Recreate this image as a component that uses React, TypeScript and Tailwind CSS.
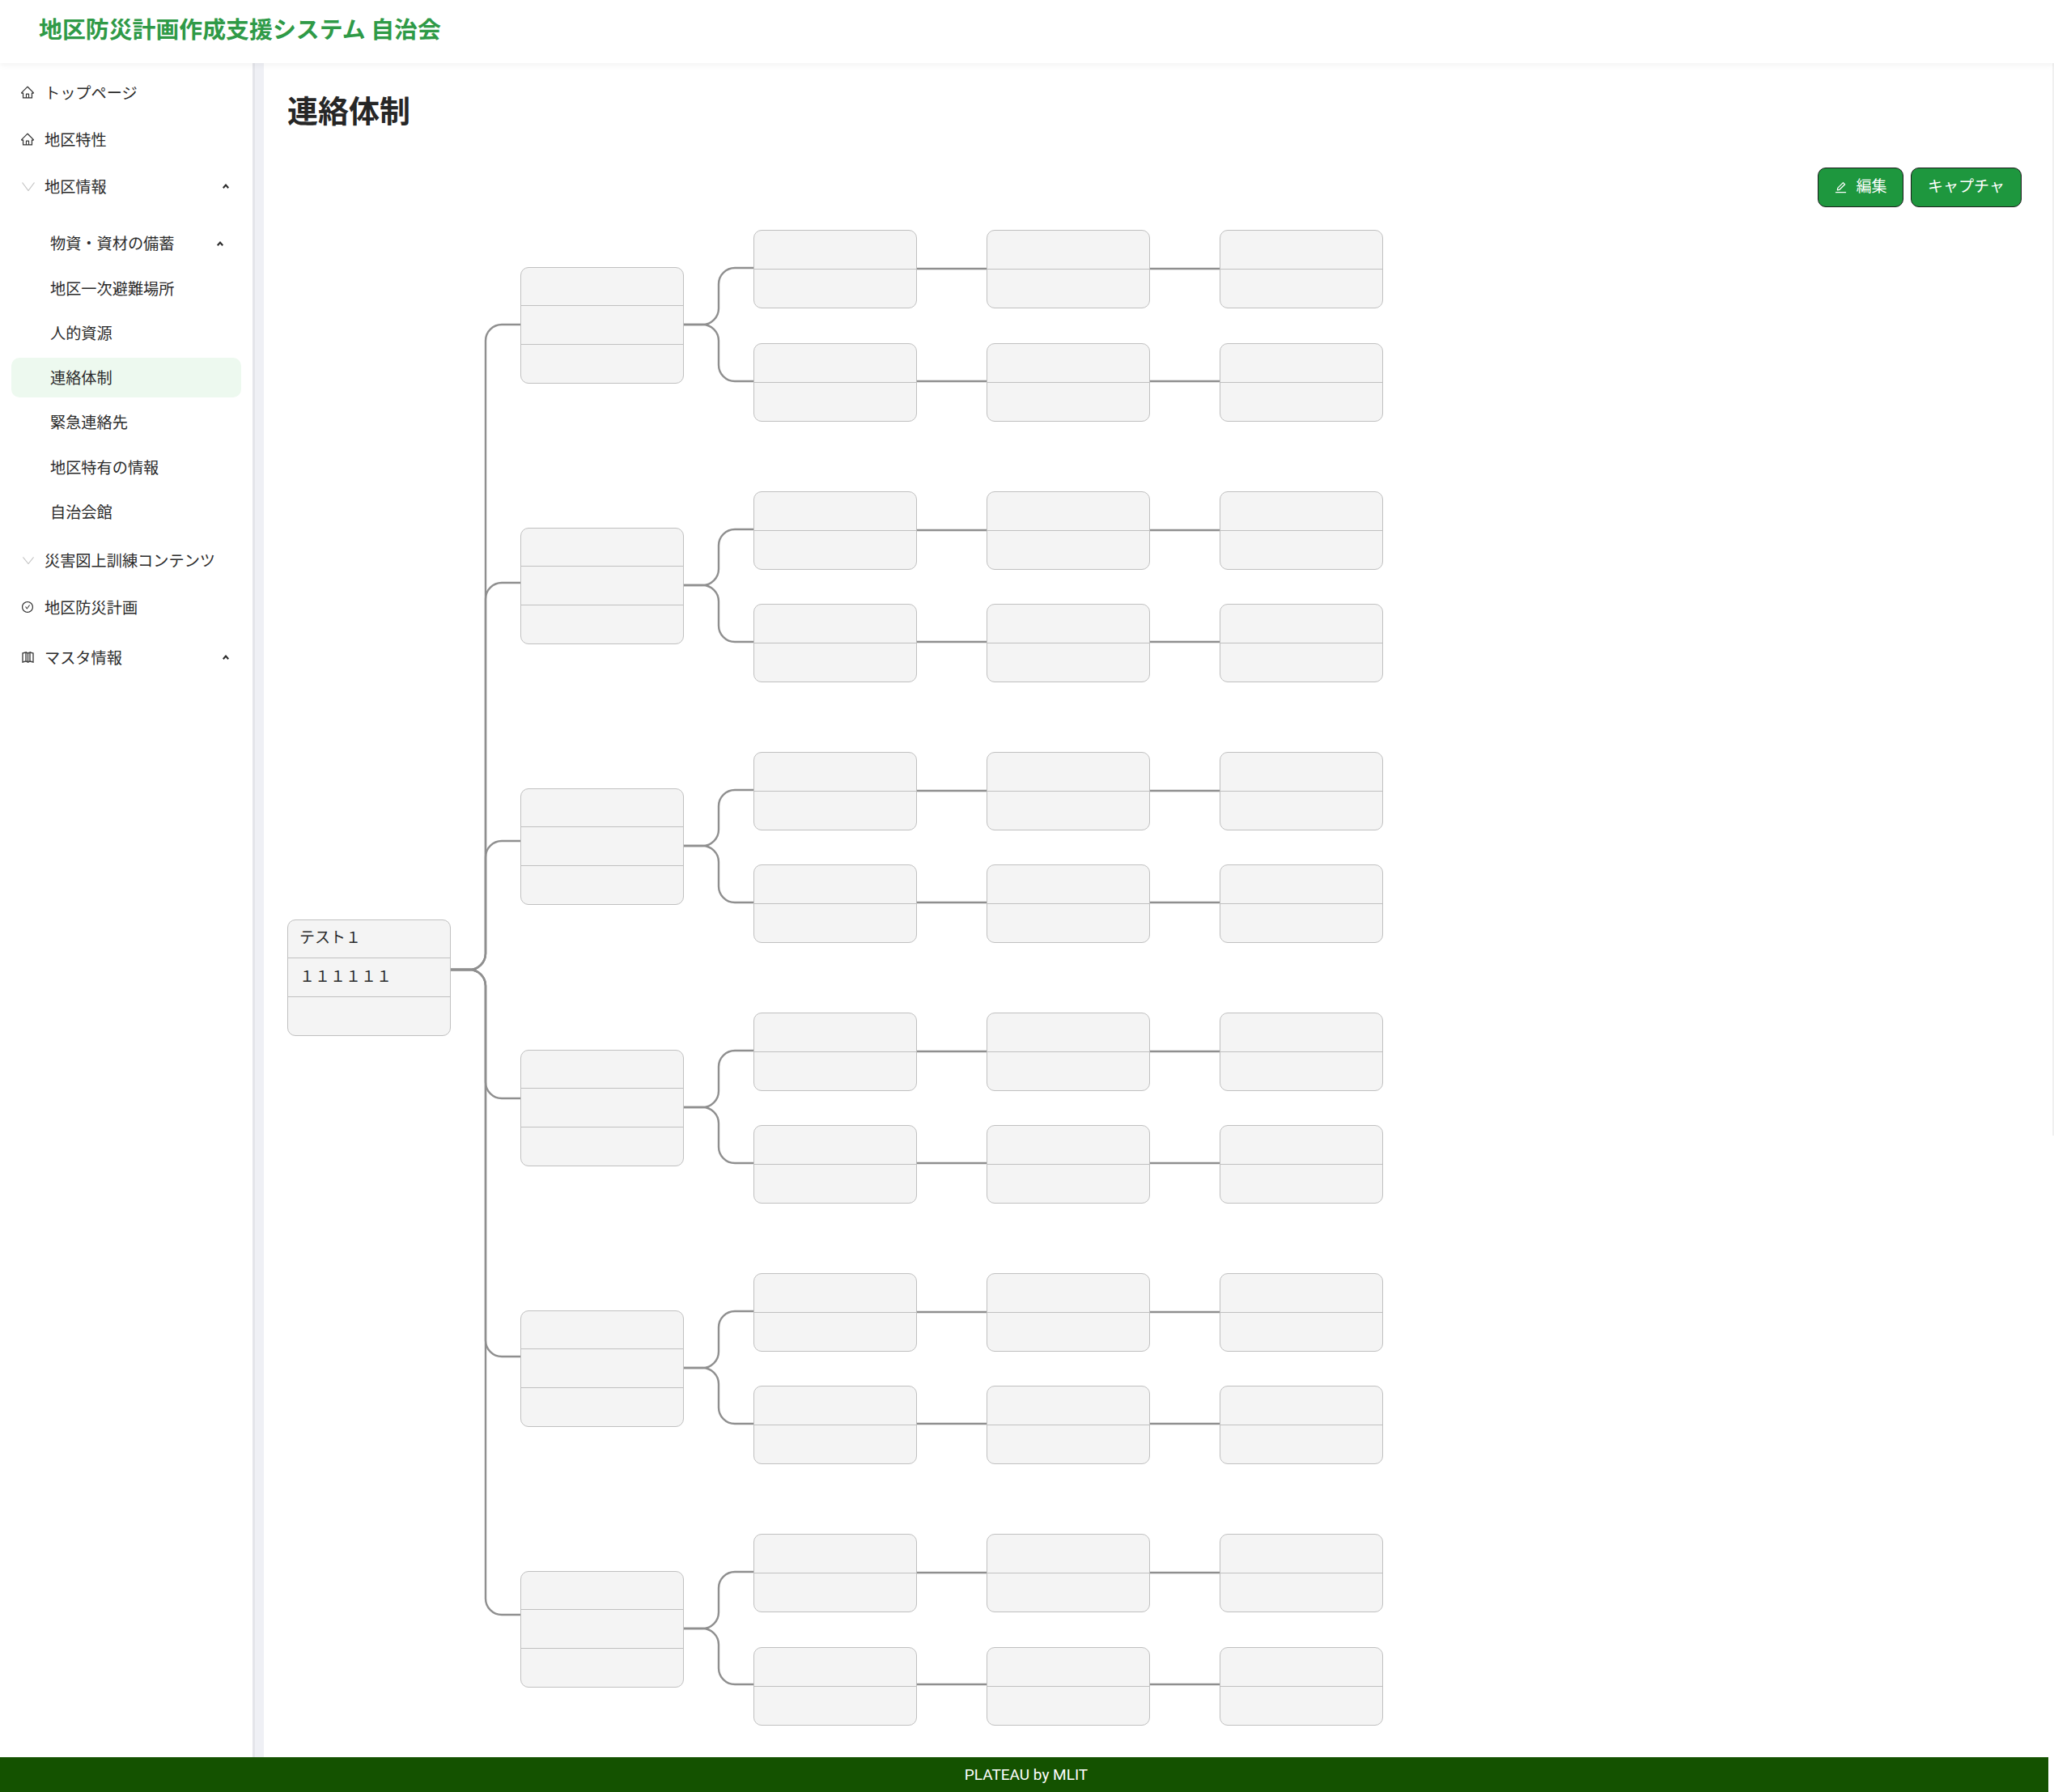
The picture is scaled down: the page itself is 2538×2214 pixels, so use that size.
import React from "react";
import { AiOutlineHome, AiOutlineCheckCircle, AiOutlineEdit } from "react-icons/ai";

const GROUP_PITCH = 322.2;
const LEFT_PITCH = 318.8;
const groups = [0, 1, 2, 3, 4, 5];
// tops of the two lower-level rows in each group, they don't land on an even pitch
const upperTops = [0, 323, 645, 967, 1289, 1611];
const lowerTops = [140, 462, 784, 1106, 1428, 1751];

const SmallUp = () => (
  <svg width="8" height="6" viewBox="0 0 8 6">
    <path d="M0.8 5.2 L4 1.6 L7.2 5.2" fill="none" stroke="#2a2a2a" strokeWidth="2.1" />
  </svg>
);

const ThinDown = ({ w = 16, h = 11 }: { w?: number; h?: number }) => (
  <svg width={w} height={h} viewBox="0 0 16 11" preserveAspectRatio="none" className="ml-[1px]">
    <path d="M0.5 0.5 L8 10.5 L15.5 0.5" fill="none" stroke="#c4c4c4" strokeWidth="1.2" />
  </svg>
);

const MapIcon = () => (
  <svg width="15" height="14" viewBox="0 0 15 14" fill="none" stroke="#444" strokeWidth="1.4">
    <path d="M1 2 L5 1 L5 12 L1 13 Z" />
    <path d="M5 1 L7.5 2 L7.5 13 L5 12" />
    <path d="M7.5 2 L10 1 L10 12 L7.5 13" />
    <path d="M10 1 L14 2 L14 13 L10 12" />
  </svg>
);

const TopItem = ({
  icon,
  label,
  chevron,
  className = "",
}: {
  icon: React.ReactNode;
  label: string;
  chevron?: boolean;
  className?: string;
}) => (
  <div className={`flex h-[58px] items-center pl-[25px] pr-[29px] ${className}`}>
    <span className="flex w-[18px] justify-center">{icon}</span>
    <span className="ml-[12px] flex-1 text-[19.2px]">{label}</span>
    {chevron && <SmallUp />}
  </div>
);

const SubItem = ({ label, active, chevron }: { label: string; active?: boolean; chevron?: boolean }) => (
  <div
    className={`mx-[14px] my-[3px] flex h-[49.3px] items-center rounded-[10px] pl-[48px] pr-[22px] text-[19.2px] ${
      active ? "bg-[#edf9ef]" : ""
    }`}
  >
    <span className="flex-1">{label}</span>
    {chevron && <SmallUp />}
  </div>
);

const Node = ({
  rowH,
  rows,
  x,
  y,
  texts = [],
}: {
  rowH: string;
  rows: number;
  x: number;
  y: number;
  texts?: string[];
}) => (
  <div
    className="absolute flex w-[202px] flex-col divide-y divide-[#c0c0c0] rounded-[10px] border border-[#c0c0c0] bg-[#f4f4f4] text-[19px]"
    style={{ left: x, top: Math.round(y) }}
  >
    {Array.from({ length: rows }).map((_, i) => (
      <div key={i} className={`flex items-center px-[14px] pb-[5px] ${rowH}`}>
        {texts[i]}
      </div>
    ))}
  </div>
);

const Connectors = () => {
  const r = 20;
  const rootY = 914;
  const lines: string[] = [];
  groups.forEach((k) => {
    const ly = Math.round(117 + LEFT_PITCH * k);
    const up = ly < rootY;
    lines.push(
      up
        ? `M202 ${rootY} H${245 - r} A${r} ${r} 0 0 0 245 ${rootY - r} V${ly + r} A${r} ${r} 0 0 1 ${245 + r} ${ly} H288`
        : `M202 ${rootY} H${245 - r} A${r} ${r} 0 0 1 245 ${rootY + r} V${ly - r} A${r} ${r} 0 0 0 ${245 + r} ${ly} H288`
    );
    const top = upperTops[k];
    const my = Math.round(GROUP_PITCH * k) + 117;
    const ay = top + 47;
    const by = Math.round(187 + 321.9 * k);
    lines.push(`M490 ${my} H${533 - r} A${r} ${r} 0 0 0 533 ${my - r} V${ay + r} A${r} ${r} 0 0 1 ${533 + r} ${ay} H576`);
    lines.push(`M490 ${my} H${533 - r} A${r} ${r} 0 0 1 533 ${my + r} V${by - r} A${r} ${r} 0 0 0 ${533 + r} ${by} H576`);
    [top + 48, by].forEach((y) => {
      lines.push(`M778 ${y} H864`);
      lines.push(`M1066 ${y} H1152`);
    });
  });
  return (
    <svg className="absolute left-0 top-0" width="1360" height="1850" fill="none" stroke="#8f8f8f" strokeWidth="2.4">
      {lines.map((d, i) => (
        <path key={i} d={d} />
      ))}
    </svg>
  );
};

export default function App() {
  return (
    <div
      className="flex h-[2214px] w-[2538px] flex-col overflow-hidden bg-white text-[#2b2b2b]"
      style={{ fontFamily: '"Noto Sans CJK JP", "Liberation Sans", sans-serif' }}
    >
      <header className="relative z-10 flex h-[78px] shrink-0 items-center bg-white pb-[9px] pl-[48px] shadow-[0_2px_8px_rgba(0,0,0,0.06)]">
        <span className="text-[28.9px] font-bold text-[#2f9a47]">地区防災計画作成支援システム 自治会</span>
      </header>

      <div className="flex min-h-0 flex-1">
        <aside className="w-[312px] shrink-0 pt-[7px]">
          <TopItem icon={<AiOutlineHome size={18} color="#333" />} label="トップページ" />
          <TopItem icon={<AiOutlineHome size={18} color="#333" />} label="地区特性" />
          <TopItem icon={<ThinDown />} label="地区情報" chevron />
          <div className="flex flex-col pt-[14px]">
            <SubItem label="物資・資材の備蓄" chevron />
            <SubItem label="地区一次避難場所" />
            <SubItem label="人的資源" />
            <SubItem label="連絡体制" active />
            <SubItem label="緊急連絡先" />
            <SubItem label="地区特有の情報" />
            <SubItem label="自治会館" />
          </div>
          <TopItem icon={<ThinDown w={14} h={9} />} label="災害図上訓練コンテンツ" className="mt-[3px]" />
          <TopItem icon={<AiOutlineCheckCircle size={16} color="#333" />} label="地区防災計画" />
          <TopItem icon={<MapIcon />} label="マスタ情報" chevron className="mt-[4px]" />
        </aside>

        <div className="w-[14px] shrink-0 border-l-[3px] border-[#e4e5ea] bg-[#eff0f5]" />

        <main className="min-w-0 flex-1 overflow-hidden pl-[29px]">
          <h1 className="mt-[28px] h-[58px] text-[38px] font-bold leading-[58px] text-[#262626]">連絡体制</h1>
          <div className="mt-[43px] flex justify-end gap-[9px] pr-[38px]">
            <button className="flex h-[49px] w-[106px] items-center justify-center gap-[10px] rounded-[10px] border border-[#1a1a1a] bg-[#1e973e] pb-[4px] text-[19px] text-white">
              <AiOutlineEdit size={17} className="mt-[4px]" />
              編集
            </button>
            <button className="flex h-[49px] w-[137px] items-center justify-center rounded-[10px] border border-[#1a1a1a] bg-[#1e973e] pb-[4px] text-[19px] text-white">
              キャプチャ
            </button>
          </div>

          <div className="relative mt-[28px] h-[1850px]">
            <Connectors />
            <Node rowH="h-[47.3px]" rows={3} x={0} y={852} texts={["テスト１", "１１１１１１"]} />
            {groups.map((k) => (
              <React.Fragment key={k}>
                <Node rowH="h-[47.3px]" rows={3} x={288} y={GROUP_PITCH * k + 46} />
                {[upperTops[k], lowerTops[k]].map((y) => (
                  <React.Fragment key={y}>
                    <Node rowH="h-[47.5px]" rows={2} x={576} y={y} />
                    <Node rowH="h-[47.5px]" rows={2} x={864} y={y} />
                    <Node rowH="h-[47.5px]" rows={2} x={1152} y={y} />
                  </React.Fragment>
                ))}
              </React.Fragment>
            ))}
          </div>
        </main>

        <div className="h-[1325px] w-[2px] shrink-0 bg-[#f0f0f0]" />
      </div>

      <footer
        className="flex h-[43px] w-[2531px] shrink-0 items-center justify-center bg-[#145200] pl-[5px] pt-[1px] text-[19px] text-white"
        style={{ fontFamily: "Roboto, sans-serif" }}
      >
        PLATEAU by MLIT
      </footer>
    </div>
  );
}
